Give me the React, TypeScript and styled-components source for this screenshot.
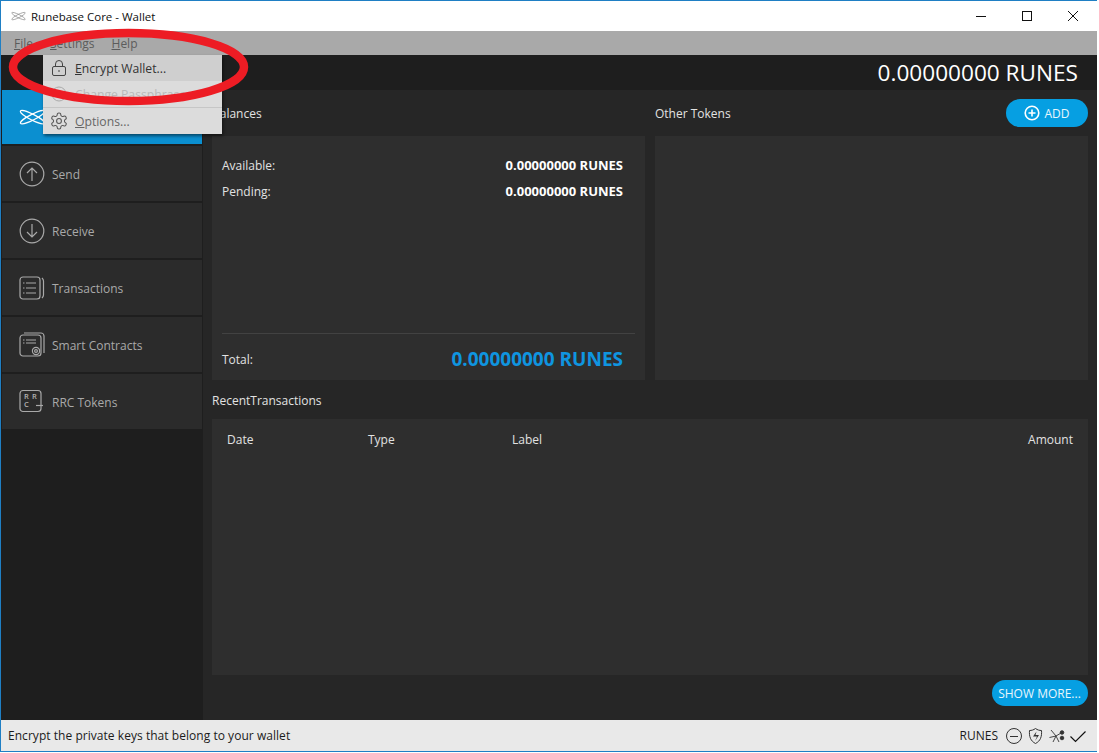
import React from 'react';
import styled, { createGlobalStyle } from 'styled-components';

const Global = createGlobalStyle`
    html, body {
        margin: 0;
        padding: 0;
        background: #fff;
    }
    body {
        font-family: "Open Sans", "Noto Sans", "Liberation Sans", sans-serif;
        font-size: 12px;
    }
`;

const Window = styled.div`
    position: relative;
    box-sizing: border-box;
    width: 1097px;
    height: 752px;
    display: flex;
    flex-direction: column;
    border: 1px solid #1f7fc4;
    border-right: 0;
    overflow: hidden;
`;

const TitleBar = styled.div`
    flex: 0 0 30px;
    display: flex;
    align-items: center;
    background: #fff;
    padding: 0 1px 0 10px;
    color: #111;
`;

const TitleText = styled.span`
    margin-left: 5px;
    font-size: 11.5px;
    flex: 1;
`;

const WinButton = styled.div`
    width: 46px;
    height: 30px;
    display: flex;
    align-items: center;
    justify-content: center;
`;

const MenuBar = styled.div`
    flex: 0 0 24px;
    display: flex;
    align-items: center;
    gap: 17px;
    padding-left: 13px;
    background: #a9a9a9;
    color: #5c5c5c;
`;

const Header = styled.div`
    flex: 0 0 35px;
    display: flex;
    align-items: center;
    justify-content: flex-end;
    padding-right: 19px;
    background: #1e1e1e;
    color: #fff;
    font-size: 22.6px;
`;

const Body = styled.div`
    flex: 1;
    display: flex;
    min-height: 0;
`;

const Sidebar = styled.nav`
    flex: 0 0 202px;
    box-sizing: border-box;
    padding: 0 1px 0 1px;
    display: flex;
    flex-direction: column;
    gap: 2px;
    background: #1e1e1e;
`;

const NavItem = styled.div<{ $active?: boolean }>`
    flex: 0 0 ${(p) => (p.$active ? 54 : 55)}px;
    display: flex;
    align-items: center;
    gap: 7px;
    padding-left: 17px;
    background: ${(p) => (p.$active ? '#0b8fd0' : '#2b2b2b')};
    color: ${(p) => (p.$active ? '#fff' : '#a9a9a9')};
`;

const NavLabel = styled.span`
    padding-top: 2px;
`;

const Content = styled.main`
    flex: 1;
    display: flex;
    flex-direction: column;
    padding: 0 9px;
    background: #262626;
    color: #e2e2e2;
`;

const TopGrid = styled.div`
    display: grid;
    grid-template-columns: 433px 433px;
    gap: 10px;
`;

const Section = styled.section`
    display: flex;
    flex-direction: column;
`;

const SectionHead = styled.div<{ $h: number; $low?: boolean }>`
    height: ${(p) => p.$h}px;
    box-sizing: border-box;
    padding-top: ${(p) => (p.$low ? 2 : 0)}px;
    display: flex;
    align-items: center;
    justify-content: space-between;
`;

const Card = styled.div<{ $h: number }>`
    height: ${(p) => p.$h}px;
    box-sizing: border-box;
    background: #2e2e2e;
`;

const BalanceCard = styled(Card)`
    display: flex;
    flex-direction: column;
    padding: 16px 10px 0;
`;

const BalanceRow = styled.div`
    height: 26px;
    display: flex;
    align-items: center;
    justify-content: space-between;
    padding-right: 12px;
`;

const Amount = styled.b`
    color: #fff;
    font-weight: 700;
    font-size: 13px;
`;

const TotalRow = styled(BalanceRow)`
    margin-top: auto;
    height: 47px;
    box-sizing: border-box;
    padding-top: 4px;
    border-top: 1px solid #424242;
`;

const TotalAmount = styled.b`
    color: #0f95e0;
    font-weight: 700;
    font-size: 19px;
`;

const TableHead = styled.div`
    display: grid;
    grid-template-columns: 141px 144px 1fr auto;
    height: 40px;
    align-items: center;
    padding: 0 15px;
`;

const Pill = styled.button`
    display: inline-flex;
    align-items: center;
    justify-content: center;
    gap: 4px;
    border: 0;
    border-radius: 14px;
    padding: 0;
    background: #069fe2;
    color: #e8f6fd;
    font: inherit;
`;

const AddPill = styled(Pill)`
    width: 82px;
    height: 28px;
`;

const MorePill = styled(Pill)`
    width: 96px;
    height: 26px;
    padding-right: 1px;
`;

const Footer = styled.div`
    height: 45px;
    display: flex;
    justify-content: flex-end;
    padding-top: 5px;
    box-sizing: border-box;
`;

const StatusBar = styled.div`
    flex: 0 0 31px;
    display: flex;
    align-items: center;
    padding: 0 10px 0 7px;
    background: #e9e9e9;
    color: #1b1b1b;
`;

const StatusText = styled.span`
    flex: 1;
    letter-spacing: 0.04px;
`;

const StatusIcons = styled.div`
    display: flex;
    align-items: center;
    gap: 4px;
    padding-left: 7px;
`;

const Dropdown = styled.div`
    position: absolute;
    left: 42px;
    top: 54px;
    width: 179px;
    height: 79px;
    display: flex;
    flex-direction: column;
    background: #dcdcdc;
    box-shadow: 1px 2px 3px rgba(0, 0, 0, 0.5);
`;

const DropItem = styled.div<{ $state?: 'hover' | 'off' }>`
    flex: 0 0 26px;
    display: flex;
    align-items: center;
    gap: 8px;
    padding-left: 8px;
    font-size: 12.2px;
    background: ${(p) => (p.$state === 'hover' ? '#cfcfcf' : 'transparent')};
    color: ${(p) => (p.$state === 'hover' ? '#333' : p.$state === 'off' ? '#b9b9b9' : '#666')};
`;

const DropDivider = styled.div`
    flex: 0 0 1px;
    background: #c6c6c6;
`;

const Scribble = styled.svg`
    position: absolute;
    left: -1px;
    top: -1px;
    pointer-events: none;
`;

const line = { fill: 'none', stroke: 'currentColor', strokeWidth: 1.2 };

function Logo({ size, color }: { size: number; color: string }) {
    return (
        <svg width={size} height={size * 0.68} viewBox="0 0 34 23" fill="none" stroke={color} strokeWidth="1.5">
            <ellipse cx="17" cy="11.500" rx="17" ry="3.600" transform="rotate(27 17 11.500)" />
            <ellipse cx="17" cy="11.500" rx="17" ry="3.600" transform="rotate(-27 17 11.500)" />
        </svg>
    );
}

function SendIcon({ down }: { down?: boolean }) {
    return (
        <svg width="26" height="26" viewBox="0 0 26 26" style={line}>
            <circle cx="13" cy="13" r="11.800" />
            {down ? <path d="M13 6v13M8 14l5 5 5-5" /> : <path d="M13 20V7M8 12l5-5 5 5" />}
        </svg>
    );
}

function ListIcon() {
    return (
        <svg width="26" height="26" viewBox="0 0 26 26" style={line}>
            <rect x="1" y="2" width="20" height="22" rx="3" />
            <path d="M23 3c1 1 1.500 2 1.500 3v14c0 1-.5 2-1.500 3" />
            <path d="M7 8h10M7 13h10M7 18h10M4 8h1.500M4 13h1.500M4 18h1.500" />
        </svg>
    );
}

function ContractIcon() {
    return (
        <svg width="26" height="26" viewBox="0 0 26 26" style={line}>
            <rect x="1" y="3" width="21" height="21" rx="3" />
            <path d="M5 1h17c1.500 0 3 1.500 3 3v17" />
            <path d="M7 8h10M7 11h10M4 8h1.500M4 11h1.500" />
            <circle cx="17" cy="19" r="3.600" fill="#2b2b2b" />
            <circle cx="17" cy="19" r="1.400" />
        </svg>
    );
}

const RrcGlyph = styled.text`
    font-size: 7.500px;
    fill: #b5b5b5;
    stroke: none;
    font-weight: 600;
`;

function RrcIcon() {
    return (
        <svg width="26" height="26" viewBox="0 0 26 26" style={line}>
            <rect x="1" y="1.500" width="21" height="21" rx="3" />
            <path d="M17 16.500h7" fill="none" />
            <RrcGlyph x="5" y="10">R</RrcGlyph>
            <RrcGlyph x="13" y="10">R</RrcGlyph>
            <RrcGlyph x="5" y="18">C</RrcGlyph>
        </svg>
    );
}

const Item = ({ children, label, active }: { children: React.ReactNode; label: string; active?: boolean }) => (
    <NavItem $active={active}>
        {children}
        <NavLabel>{label}</NavLabel>
    </NavItem>
);

function App() {
    return (
        <>
            <Global />
            <Window>
                <TitleBar>
                    <Logo size={15} color="#8a8a8a" />
                    <TitleText>Runebase Core - Wallet</TitleText>
                    <WinButton>
                        <svg width="10" height="10" viewBox="0 0 10 10" stroke="#111" fill="none">
                            <path d="M0 5.500h10" />
                        </svg>
                    </WinButton>
                    <WinButton>
                        <svg width="10" height="10" viewBox="0 0 10 10" stroke="#111" fill="none">
                            <rect x=".5" y=".5" width="9" height="9" />
                        </svg>
                    </WinButton>
                    <WinButton>
                        <svg width="10" height="10" viewBox="0 0 10 10" stroke="#111" fill="none">
                            <path d="M0 0l10 10M10 0L0 10" />
                        </svg>
                    </WinButton>
                </TitleBar>
                <MenuBar>
                    <span>
                        <u>F</u>ile
                    </span>
                    <span>
                        <u>S</u>ettings
                    </span>
                    <span>
                        <u>H</u>elp
                    </span>
                </MenuBar>
                <Header>0.00000000 RUNES</Header>
                <Body>
                    <Sidebar>
                        <Item label="Overview" active>
                            <Logo size={27} color="#fff" />
                        </Item>
                        <Item label="Send">
                            <SendIcon />
                        </Item>
                        <Item label="Receive">
                            <SendIcon down />
                        </Item>
                        <Item label="Transactions">
                            <ListIcon />
                        </Item>
                        <Item label="Smart Contracts">
                            <ContractIcon />
                        </Item>
                        <Item label="RRC Tokens">
                            <RrcIcon />
                        </Item>
                    </Sidebar>
                    <Content>
                        <TopGrid>
                            <Section>
                                <SectionHead $h={46}>Balances</SectionHead>
                                <BalanceCard $h={244}>
                                    <BalanceRow>
                                        <span>Available:</span>
                                        <Amount>0.00000000 RUNES</Amount>
                                    </BalanceRow>
                                    <BalanceRow>
                                        <span>Pending:</span>
                                        <Amount>0.00000000 RUNES</Amount>
                                    </BalanceRow>
                                    <TotalRow>
                                        <span>Total:</span>
                                        <TotalAmount>0.00000000 RUNES</TotalAmount>
                                    </TotalRow>
                                </BalanceCard>
                            </Section>
                            <Section>
                                <SectionHead $h={46}>
                                    Other Tokens
                                    <AddPill>
                                        <svg width="16" height="16" viewBox="0 0 16 16" fill="none" stroke="#fff" strokeWidth="1.600">
                                            <circle cx="8" cy="8" r="6.800" />
                                            <path d="M8 4.500v7M4.500 8h7" />
                                        </svg>
                                        ADD
                                    </AddPill>
                                </SectionHead>
                                <Card $h={244} />
                            </Section>
                        </TopGrid>
                        <SectionHead $h={39} $low>
                            RecentTransactions
                        </SectionHead>
                        <Card $h={256}>
                            <TableHead>
                                <span>Date</span>
                                <span>Type</span>
                                <span>Label</span>
                                <span>Amount</span>
                            </TableHead>
                        </Card>
                        <Footer>
                            <MorePill>SHOW MORE...</MorePill>
                        </Footer>
                    </Content>
                </Body>
                <StatusBar>
                    <StatusText>Encrypt the private keys that belong to your wallet</StatusText>
                    <span>RUNES</span>
                    <StatusIcons>
                        <svg width="18" height="18" viewBox="0 0 18 18" fill="none" stroke="#333">
                            <circle cx="9" cy="9" r="7.500" />
                            <path d="M5 9.500h8" />
                        </svg>
                        <svg width="17" height="18" viewBox="0 0 17 18" fill="none" stroke="#333">
                            <path d="M8.500 1.500c2 1.500 4 2 6 2 .5 6-1 10.500-6 13-5-2.500-6.500-7-6-13 2 0 4-.5 6-2z" />
                            <path d="M9.500 4.500l-3.500 5h4l-2 4.500 4-6h-3.500z" fill="#333" stroke="none" />
                        </svg>
                        <svg width="17" height="18" viewBox="0 0 17 18" fill="none" stroke="#333" strokeWidth=".9">
                            <path d="M8 9L3 3M8 9L1.500 10.500M8 9l-3 6M8 9l5-3M8 9l3 6" />
                            <circle cx="14" cy="5.500" r="1.800" fill="#333" />
                            <circle cx="14" cy="11" r="1.800" fill="#333" />
                        </svg>
                        <svg width="18" height="18" viewBox="0 0 18 18" fill="none" stroke="#111" strokeWidth="1.200">
                            <path d="M1.500 9.500l5 5 10-10" />
                        </svg>
                    </StatusIcons>
                </StatusBar>
                <Dropdown>
                    <DropItem $state="hover">
                        <svg width="16" height="18" viewBox="0 0 16 18" fill="none" stroke="#444">
                            <rect x="1.500" y="7.500" width="13" height="9" rx="1.500" />
                            <path d="M4.500 7.500V5a3.500 3.500 0 017 0v2.500M7 12h2" />
                        </svg>
                        <span>
                            <u>E</u>ncrypt Wallet...
                        </span>
                    </DropItem>
                    <DropItem $state="off">
                        <svg width="16" height="18" viewBox="0 0 16 18" fill="none" stroke="#aaa">
                            <circle cx="8" cy="9" r="7" />
                            <circle cx="8" cy="9" r="3" />
                        </svg>
                        <span>
                            <u>C</u>hange Passphrase...
                        </span>
                    </DropItem>
                    <DropDivider />
                    <DropItem>
                        <svg width="16" height="18" viewBox="2 1 20 22" fill="none" stroke="#555" strokeWidth="1.300">
                            <path d="M12.220 2h-.44a2 2 0 0 0-2 2v.18a2 2 0 0 1-1 1.730l-.43.250a2 2 0 0 1-2 0l-.15-.08a2 2 0 0 0-2.730.730l-.22.380a2 2 0 0 0 .730 2.730l.15.100a2 2 0 0 1 1 1.720v.510a2 2 0 0 1-1 1.740l-.15.090a2 2 0 0 0-.730 2.730l.22.380a2 2 0 0 0 2.730.730l.15-.08a2 2 0 0 1 2 0l.43.250a2 2 0 0 1 1 1.730V20a2 2 0 0 0 2 2h.44a2 2 0 0 0 2-2v-.18a2 2 0 0 1 1-1.730l.43-.250a2 2 0 0 1 2 0l.15.080a2 2 0 0 0 2.730-.730l.22-.390a2 2 0 0 0-.730-2.730l-.15-.080a2 2 0 0 1-1-1.740v-.500a2 2 0 0 1 1-1.740l.15-.090a2 2 0 0 0 .730-2.730l-.22-.380a2 2 0 0 0-2.730-.730l-.15.080a2 2 0 0 1-2 0l-.43-.250a2 2 0 0 1-1-1.730V4a2 2 0 0 0-2-2z" />
                            <circle cx="12" cy="12" r="3" />
                        </svg>
                        <span>
                            <u>O</u>ptions...
                        </span>
                    </DropItem>
                </Dropdown>
                <Scribble width="260" height="120" viewBox="0 0 260 120" fill="none" stroke="#ed1c24" strokeWidth="8.500">
                    <ellipse cx="128.500" cy="67" rx="115.500" ry="34" />
                </Scribble>
            </Window>
        </>
    );
}

export default App;
